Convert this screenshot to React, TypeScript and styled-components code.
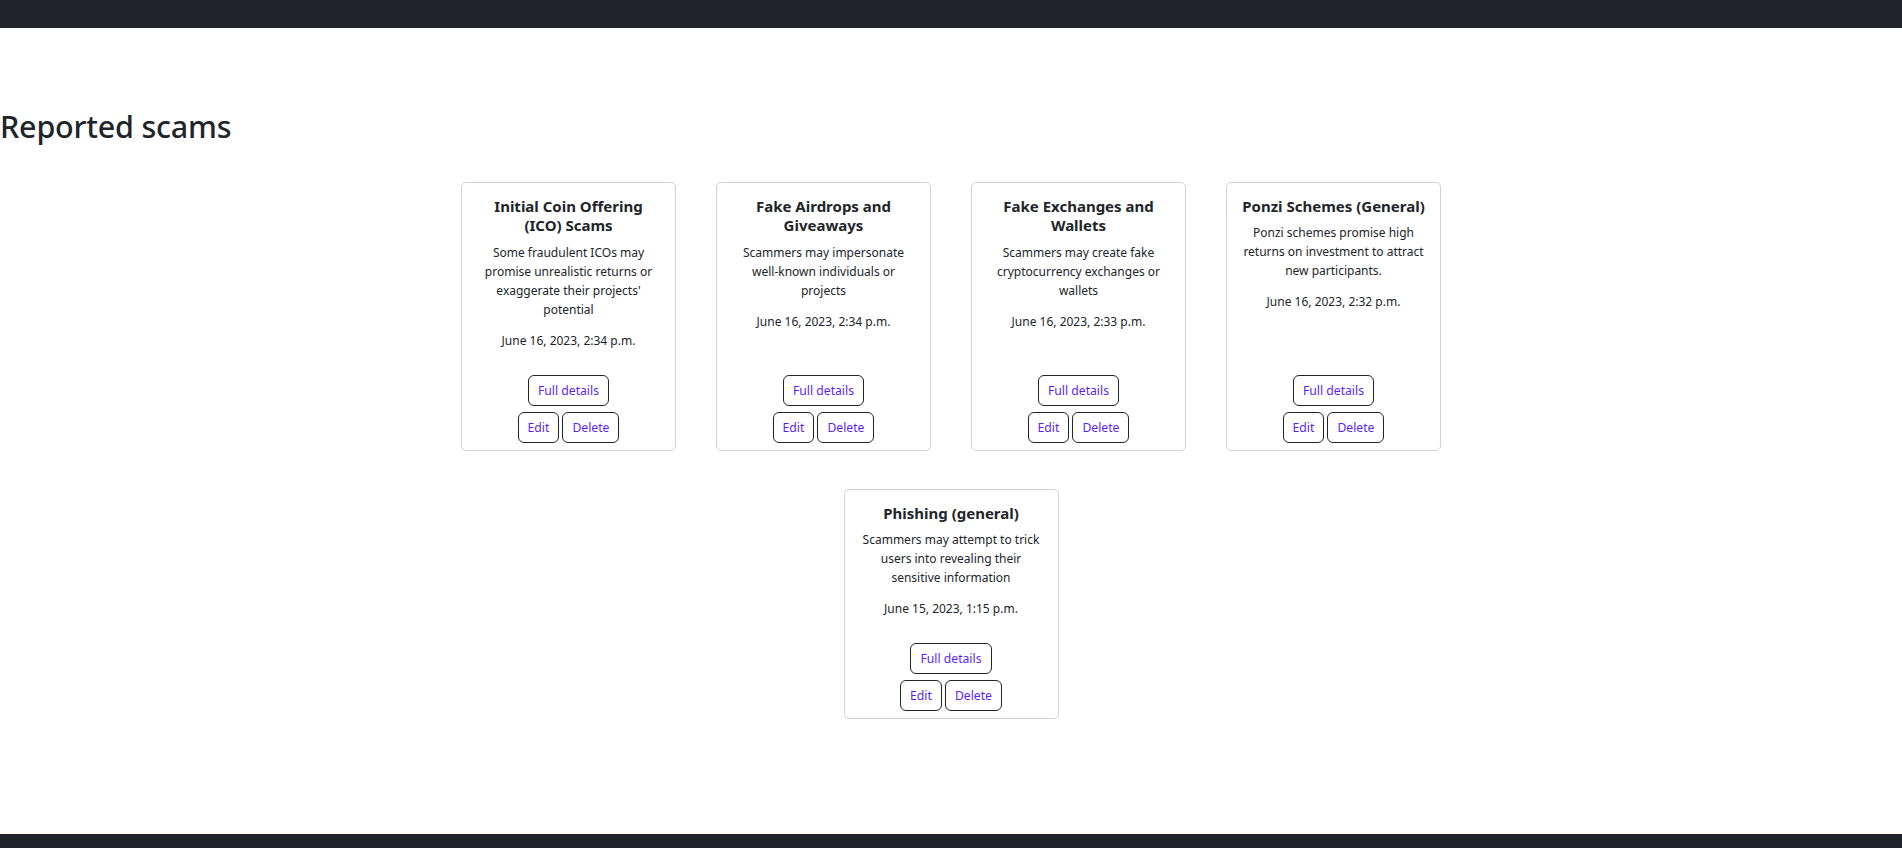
import React from "react";
import styled, { createGlobalStyle } from "styled-components";

const GlobalStyle = createGlobalStyle`
  html, body {
    margin: 0;
    padding: 0;
    background: #ffffff;
  }
  body {
    font-family: "Noto Sans", "Open Sans", Arial, sans-serif;
    color: #212529;
  }
  * { box-sizing: border-box; }
`;

const Page = styled.div`
  min-height: 848px;
  display: flex;
  flex-direction: column;
`;

const TopBar = styled.header`
  height: 28px;
  background: #212529;
`;

const Main = styled.main`
  flex: 1;
  padding-top: 80px;
`;

const Heading = styled.h2`
  margin: 0;
  font-size: 30.5px;
  font-weight: 500;
  line-height: 1.2;
  color: #212529;
  letter-spacing: -0.2px;
`;

const Grid = styled.div`
  width: 980px;
  margin: 37px auto 0;
  display: flex;
  flex-wrap: wrap;
  justify-content: center;
  gap: 38px 40px;
`;

const Card = styled.div`
  width: 215px;
  border: 1px solid rgba(0, 0, 0, 0.175);
  border-radius: 5px;
  padding: 14px 12px 7px;
  display: flex;
  flex-direction: column;
  align-items: center;
  text-align: center;
`;

const Title = styled.h5`
  margin: 0 0 7px;
  font-size: 15px;
  font-weight: 700;
  line-height: 19.5px;
  color: #212529;
`;

const Desc = styled.p`
  margin: 0 0 12px;
  font-size: 12px;
  line-height: 19px;
  color: #212529;
`;

const DateText = styled.p`
  margin: 0 0 25px;
  font-size: 12px;
  line-height: 19px;
  color: #212529;
`;

const Actions = styled.div`
  margin-top: auto;
  display: flex;
  flex-direction: column;
  align-items: center;
  gap: 6px;
`;

const ButtonRow = styled.div`
  display: flex;
  gap: 3px;
`;

const Button = styled.button`
  font-family: inherit;
  font-size: 12.2px;
  line-height: 19px;
  padding: 5px 9px;
  color: #5a1ff5;
  background: #ffffff;
  border: 1px solid #212529;
  border-radius: 6px;
  cursor: pointer;
`;

const BottomBar = styled.footer`
  height: 14px;
  background: #212529;
`;

type Scam = { title: string; desc: string; date: string };

const scams: Scam[] = [
  {
    title: "Initial Coin Offering (ICO) Scams",
    desc: "Some fraudulent ICOs may promise unrealistic returns or exaggerate their projects' potential",
    date: "June 16, 2023, 2:34 p.m.",
  },
  {
    title: "Fake Airdrops and Giveaways",
    desc: "Scammers may impersonate well-known individuals or projects",
    date: "June 16, 2023, 2:34 p.m.",
  },
  {
    title: "Fake Exchanges and Wallets",
    desc: "Scammers may create fake cryptocurrency exchanges or wallets",
    date: "June 16, 2023, 2:33 p.m.",
  },
  {
    title: "Ponzi Schemes (General)",
    desc: "Ponzi schemes promise high returns on investment to attract new participants.",
    date: "June 16, 2023, 2:32 p.m.",
  },
  {
    title: "Phishing (general)",
    desc: "Scammers may attempt to trick users into revealing their sensitive information",
    date: "June 15, 2023, 1:15 p.m.",
  },
];

export default function App() {
  return (
    <Page>
      <GlobalStyle />
      <TopBar />
      <Main>
        <Heading>Reported scams</Heading>
        <Grid>
          {scams.map((s) => (
            <Card key={s.title}>
              <Title>{s.title}</Title>
              <Desc>{s.desc}</Desc>
              <DateText>{s.date}</DateText>
              <Actions>
                <Button>Full details</Button>
                <ButtonRow>
                  <Button>Edit</Button>
                  <Button>Delete</Button>
                </ButtonRow>
              </Actions>
            </Card>
          ))}
        </Grid>
      </Main>
      <BottomBar />
    </Page>
  );
}
